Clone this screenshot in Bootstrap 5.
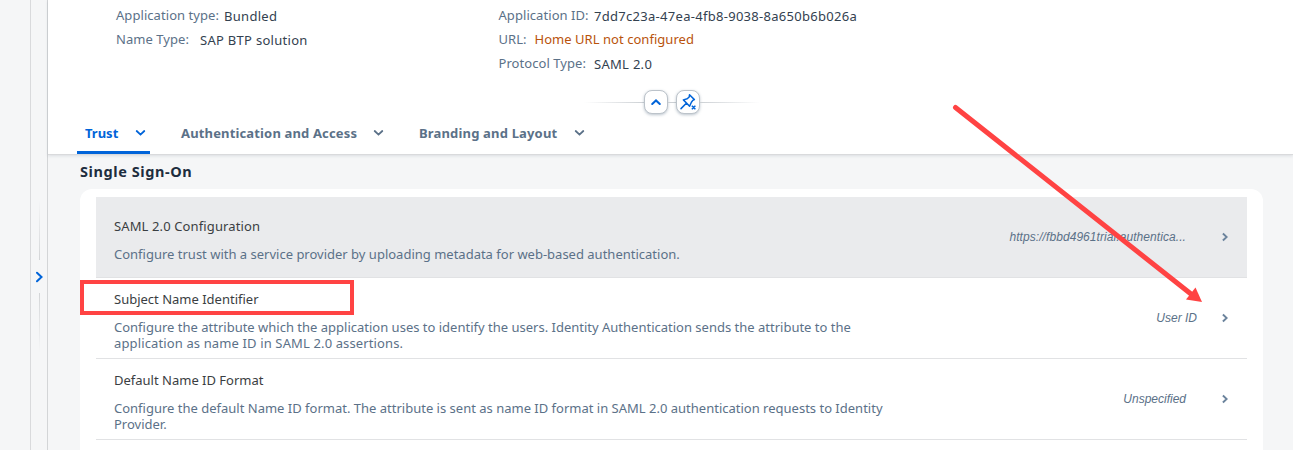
<!DOCTYPE html>
<html lang="en">
<head>
<meta charset="utf-8">
<meta name="viewport" content="width=device-width, initial-scale=1">
<title>Application - Trust</title>
<link href="https://cdn.jsdelivr.net/npm/bootstrap@5.3.0/dist/css/bootstrap.min.css" rel="stylesheet">
<style>
body{font-family:"Noto Sans",Roboto,sans-serif;font-size:13px;line-height:16px;letter-spacing:0;color:#1d2d3e;background:#f5f6f7;height:450px;overflow:hidden}
.side{width:31px;border-right:1px solid #d9dadc}
.rail{width:17px;border-right:1px solid #d3d5d7}
.rail-line{width:1px;height:60px;margin-left:8px}
.rail-line.up{margin-top:199px;height:61px;background:linear-gradient(to top,#d3d5d7,#f5f6f7)}
.rail-line.down{background:linear-gradient(#d3d5d7,#f5f6f7)}
.rail-btn{height:33px;padding-left:5px}
.app-head{height:155px;border-bottom:1px solid #d9dadc;box-shadow:0 1px 3px rgba(34,53,72,.12)}
.facts{padding:7px 0 0 68px;height:90px}
.facts-a{width:382.5px}
.fact{height:24px;color:#5b7188;letter-spacing:.06px}
.fact b{font-weight:400;color:#33414f;position:relative;top:1px;letter-spacing:.29px}
.fact .warn{color:#b9530c;top:0;letter-spacing:.04px}
.fact .s{flex:none}
.w-type{width:108px}
.w-name{width:84px}
.w-id{width:95.5px}
.w-url{width:36px}
.snap{height:24px;padding-left:536px}
.snap-line{height:1px;width:60px}
.snap-line.lead-in{background:linear-gradient(to right,#fff,#ccd0d4)}
.snap-line.mid{width:8px;background:#ccd0d4}
.snap-line.lead-out{background:linear-gradient(to right,#ccd0d4,#fff)}
.snap-btn{width:24px;height:24px;border:1px solid #bcc3ca;border-radius:8px;background:#fff;box-shadow:0 1px 3px rgba(85,107,130,.4)}
.tabs{height:40px;padding-left:29px;gap:23px}
.tab-item{font-weight:700;font-size:13px;color:#5b7188;height:40px;padding:11px 4px 0 8px;border-bottom:3px solid transparent}
.tab-item.active{color:#0064d9;border-color:#0064d9;border-radius:2px 2px 0 0}
.tab-item svg{margin-top:4px}
.w-tab1{width:50px}
.w-tab2{width:192px;letter-spacing:.15px}
.w-tab3{width:155px;letter-spacing:.17px}
.sec-title{font-size:14.5px;line-height:20px;font-weight:700;margin:6px 0 8px 32px;letter-spacing:.58px}
.panel{margin:0 30px 0 32px;border-radius:12px 12px 0 0;padding:8px 16px;height:261px}
.entry{height:81px;border-bottom:1px solid #e1e2e4;padding:0 19px 0 18px}
.entry.sel{background:#eaebed}
.entry-body{padding-top:6px}
.entry-name{color:#3a3e42;margin-bottom:12px}
.sel .entry-name{letter-spacing:.12px}
.entry-text{color:#5b7188}
.entry-text .tail{letter-spacing:.13px}
.entry-value{font:italic 12px/16px "Liberation Sans",sans-serif;color:#5b7188;margin-right:35px}
.entry-value.url{letter-spacing:.07px}
.entry-value.id{margin-right:24px}
.entry>svg{margin-bottom:1px}
.mark-box{left:80px;top:280px;width:274px;height:35px;border:4px solid #ff4343}
.s{display:inline-block;white-space:nowrap}
</style>
</head>
<body class="d-flex position-relative">
<aside class="side flex-shrink-0"></aside>
<div class="rail flex-shrink-0">
  <div class="rail-line up"></div>
  <div class="rail-btn d-flex align-items-center"><svg width="9" height="12" viewBox="0 0 9 12" fill="none" stroke="#0064d9" stroke-width="2"><path d="M1 1.8 5.5 6 1 10.2" stroke-linecap="round"/></svg></div>
  <div class="rail-line down"></div>
</div>
<main class="flex-grow-1">
  <header class="app-head bg-white">
    <div class="facts d-flex">
      <div class="facts-a">
        <div class="fact d-flex"><span class="s w-type">Application type:</span><b class="s">Bundled</b></div>
        <div class="fact d-flex"><span class="s w-name">Name Type:</span><b class="s">SAP BTP solution</b></div>
      </div>
      <div>
        <div class="fact d-flex"><span class="s w-id">Application ID:</span><b class="s">7dd7c23a-47ea-4fb8-9038-8a650b6b026a</b></div>
        <div class="fact d-flex"><span class="s w-url">URL:</span><b class="s warn">Home URL not configured</b></div>
        <div class="fact d-flex"><span class="s w-id">Protocol Type:</span><b class="s">SAML 2.0</b></div>
      </div>
    </div>
    <div class="snap d-flex align-items-center">
      <div class="snap-line lead-in"></div>
      <div class="snap-btn d-flex align-items-center justify-content-center"><svg width="12" height="8" viewBox="0 0 12 8" fill="none" stroke="#0064d9" stroke-width="2" stroke-linecap="round"><path d="M2.2 6 6 2.4 9.8 6"/></svg></div>
      <div class="snap-line mid"></div>
      <div class="snap-btn d-flex align-items-center justify-content-center"><svg width="18" height="18" viewBox="0 0 18 18" fill="none" stroke="#0064d9" stroke-width="1.5" stroke-linejoin="round" stroke-linecap="round"><path d="M10.5 1.8 15.4 6.6 13.8 7.4 12.4 9.3 10.6 13.2 4.4 6.9 8.2 5.8 10.2 4ZM7.3 10.3 2 15.6"/><path d="m13.3 13.2 2.6 2.6m0-2.6-2.6 2.6" stroke-width="1.6"/></svg></div>
      <div class="snap-line lead-out"></div>
    </div>
    <nav class="tabs d-flex">
      <div class="tab-item active d-flex"><span class="s w-tab1">Trust</span><svg width="11" height="8" viewBox="0 0 11 8" fill="none" stroke="currentColor" stroke-width="1.8" stroke-linecap="round"><path d="M1.7 2 5.5 5.6 9.3 2"/></svg></div>
      <div class="tab-item d-flex"><span class="s w-tab2">Authentication and Access</span><svg width="11" height="8" viewBox="0 0 11 8" fill="none" stroke="currentColor" stroke-width="1.8" stroke-linecap="round"><path d="M1.7 2 5.5 5.6 9.3 2"/></svg></div>
      <div class="tab-item d-flex"><span class="s w-tab3">Branding and Layout</span><svg width="11" height="8" viewBox="0 0 11 8" fill="none" stroke="currentColor" stroke-width="1.8" stroke-linecap="round"><path d="M1.7 2 5.5 5.6 9.3 2"/></svg></div>
    </nav>
  </header>
  <h2 class="sec-title">Single Sign-On</h2>
  <section class="panel bg-white">
    <div class="entry sel d-flex">
      <div class="entry-body align-self-center flex-grow-1"><div class="entry-name">SAML 2.0 Configuration</div><div class="entry-text"><span class="s">Configure trust with a service provider by uploading metadata for web-based authentication.</span></div></div>
      <div class="entry-value url align-self-center">https://fbbd4961trial.authentica...</div>
      <svg class="align-self-center" width="7" height="10" viewBox="0 0 7 10" fill="none" stroke="#6b839c" stroke-width="1.9"><path d="M1.9 1.5 5.7 5 1.9 8.5"/></svg>
    </div>
    <div class="entry d-flex">
      <div class="entry-body align-self-center flex-grow-1"><div class="entry-name">Subject Name Identifier</div><div class="entry-text"><span class="s">Configure the attribute which the application uses to identify the users. Identity Authentication sends the attribute to the</span><br><span class="s tail">application as name ID in SAML 2.0 assertions.</span></div></div>
      <div class="entry-value id align-self-center">User ID</div>
      <svg class="align-self-center" width="7" height="10" viewBox="0 0 7 10" fill="none" stroke="#6b839c" stroke-width="1.9"><path d="M1.9 1.5 5.7 5 1.9 8.5"/></svg>
    </div>
    <div class="entry d-flex">
      <div class="entry-body align-self-center flex-grow-1"><div class="entry-name">Default Name ID Format</div><div class="entry-text"><span class="s">Configure the default Name ID format. The attribute is sent as name ID format in SAML 2.0 authentication requests to Identity</span><br><span class="s">Provider.</span></div></div>
      <div class="entry-value align-self-center">Unspecified</div>
      <svg class="align-self-center" width="7" height="10" viewBox="0 0 7 10" fill="none" stroke="#6b839c" stroke-width="1.9"><path d="M1.9 1.5 5.7 5 1.9 8.5"/></svg>
    </div>
  </section>
</main>
<div class="mark-box position-absolute"></div>
<svg class="position-absolute top-0 start-0" width="1293" height="450" viewBox="0 0 1293 450"><path d="M955.5 107.5 1191 294" stroke="#ff4343" stroke-width="5" stroke-linecap="round"/><path d="M1202 302 1195.5 287.5 1186 299.5Z" fill="#ff4343"/></svg>
<script src="https://cdn.jsdelivr.net/npm/bootstrap@5.3.0/dist/js/bootstrap.bundle.min.js"></script>
</body>
</html>
